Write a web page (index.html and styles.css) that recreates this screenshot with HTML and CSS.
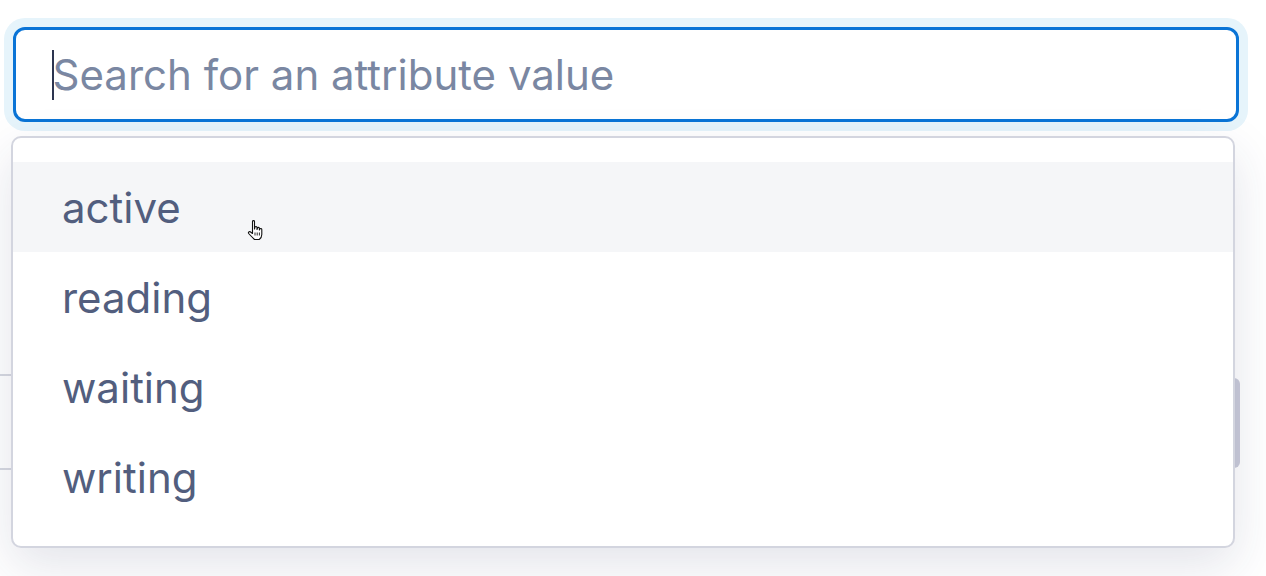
FILE: index.html
```html
<!DOCTYPE html>
<html>
<head>
<meta charset="utf-8">
<link rel="stylesheet" href="styles.css">
</head>
<body>
<div class="page">
  <div class="under">
    <div class="under-left">
      <div class="under-line first"></div>
      <div class="under-line"></div>
    </div>
    <div class="under-right"></div>
  </div>
  <div class="combo">
    <div class="field">
      <span class="caret"></span>
      <span class="placeholder">Search for an attribute value</span>
    </div>
  </div>
  <ul class="menu">
    <li class="item hover">active</li>
    <li class="item">reading</li>
    <li class="item">waiting</li>
    <li class="item">writing</li>
  </ul>
  <svg class="cursor" width="22" height="26" viewBox="0 0 22 26">
    <path d="M6.5 2.5 C6.5 1.3 8.5 1.3 8.5 2.5 L8.5 10 L9 8.2 C9.3 7.2 11 7.2 11 8.4 L11 10.5 L11.5 9 C11.8 8.1 13.4 8.1 13.4 9.2 L13.4 11 L13.9 10 C14.3 9.2 15.8 9.4 15.8 10.5 L15.8 15.5 C15.8 18 14.6 19.5 13.2 20.5 L8.5 20.5 C7.5 19.5 3.5 15.5 2.7 14.5 C1.9 13.4 3 12.2 4.2 12.8 L6.5 14.5 Z" fill="#fff" stroke="#111" stroke-width="1.1" stroke-linejoin="round"/>
    <path d="M9 13.5 V16.5 M11.2 13.5 V16.5 M13.4 13.5 V16.5" stroke="#111" stroke-width="0.9"/>
  </svg>
</div>
</body>
</html>
```

FILE: styles.css
```css
* { box-sizing: border-box; }
html, body { margin: 0; padding: 0; background: #ffffff; }
body {
  font-family: Inter, "Noto Sans", "Liberation Sans", sans-serif;
  width: 1266px;
  height: 576px;
  overflow: hidden;
}
.page {
  position: relative;
  width: 1266px;
  height: 576px;
  padding: 27px 0 0 13px;
}
.under {
  position: absolute;
  left: 0;
  top: 0;
  width: 1266px;
  height: 576px;
}
.under-left {
  position: absolute;
  left: 0;
  top: 374px;
  width: 12px;
}
.under-line {
  height: 2px;
  background: #d6d8e0;
  margin-top: 92px;
}
.under-line.first { margin-top: 0; }
.under-right {
  position: absolute;
  left: 1226px;
  top: 378px;
  width: 14px;
  height: 90px;
  border-radius: 6px;
  background: #c9cbd9;
}
.combo {
  position: relative;
  width: 1226px;
  height: 95px;
  border: 3px solid #0a74d6;
  border-radius: 12px;
  background: #fff;
  box-shadow: 0 0 0 9px #e6f4fb;
}
.field {
  display: flex;
  align-items: center;
  height: 100%;
  padding-left: 36px;
}
.caret {
  width: 1.5px;
  height: 50px;
  background: #2d3550;
  margin-right: -1px;
}
.placeholder {
  font-size: 42px;
  color: #7a87a2;
}
.menu {
  position: absolute;
  left: 11px;
  top: 136px;
  width: 1224px;
  height: 412px;
  margin: 0;
  padding: 24px 0 0 0;
  list-style: none;
  background: #fff;
  border: 2px solid #d3d5df;
  border-radius: 10px;
  box-shadow: 0 18px 50px rgba(40, 48, 90, 0.13);
}
.item {
  height: 90px;
  display: flex;
  align-items: center;
  padding-left: 49px;
  font-size: 42px;
  color: #525e7e;
}
.item.hover { background: #f5f6f8; }
.cursor {
  position: absolute;
  left: 246px;
  top: 219px;
}
```
